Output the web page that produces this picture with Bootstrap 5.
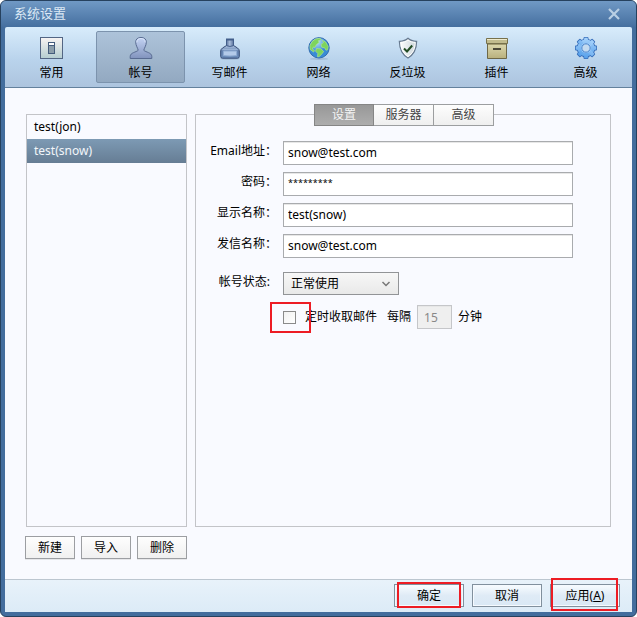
<!DOCTYPE html>
<html lang="zh-CN">
<head>
<meta charset="utf-8">
<meta name="viewport" content="width=device-width, initial-scale=1">
<title>系统设置</title>
<link href="https://cdn.jsdelivr.net/npm/bootstrap@5.3.0/dist/css/bootstrap.min.css" rel="stylesheet">
<style>
body{font:12px/16px "Noto Sans","Noto Sans CJK SC",sans-serif;color:#000;background:#fff}
button,input,select{font-size:12px;line-height:16px;font-family:inherit}
.win{min-height:100vh;padding:0 4px 4px;border:1px solid #26415e;border-radius:6px;background:#436d9d}
.titlebar{height:26px;margin:0 -4px;padding:0 12px 2px 13px;border-radius:5px 5px 0 0;background:linear-gradient(#7099c5,#456f9f);color:#dce9f5}
.titlebar h1{font-size:13px;line-height:20px;font-weight:400}
.closer{width:20px;height:20px;border:0;padding:0;background:none;line-height:0}
.tools{height:61px;padding:4px 2px;border-bottom:1px solid #64819d;border-radius:2px 2px 0 0;background:linear-gradient(#d8ecfb,#b9d3ec 55%,#adc4de)}
.tool{flex:1 1 0;min-width:0;height:52px;padding:3px 0 0;border:1px solid transparent;border-radius:2px;background:none;color:#000}
.tool.active{border-color:#7c93ad;background:linear-gradient(#adc3da,#93a9c1)}
.tool svg{display:block;margin:0 auto 5px}
.main{background:#f9faff;padding:26px 21px 20px}
.side{width:161px;flex:none}
.frame{border:1px solid #c3c4c8}
.acct{height:24px;padding:4px 7px;border:0;background:none;text-align:left;color:#000}
.acct.active{background:linear-gradient(#7d9ab4,#667d94);color:#f2f6fa}
.gbtn{height:23px;padding:2px 0;border:1px solid #9c9ea2;background:linear-gradient(#fefefe,#f0f0f0);box-shadow:0 1px 0 #e6e7ea;color:#000}
.side-actions{width:162px;gap:6px;margin:9px 0 0 -1px}
.tabs{margin-top:-11px;padding-left:2px}
.tab{width:60px;height:22px;padding:2px 0;border:1px solid #9c9ea0;background:linear-gradient(#fdfdfd,#efefef);color:#444}
.tab+.tab{border-left:0}
.tab.active{border-color:#858585;background:linear-gradient(#989898,#adadad);color:#f4f4f4}
.fields{display:grid;grid-template-columns:81px 1fr;column-gap:6px;row-gap:7px;padding:15px 37px 0 0}
.fields label.cap{text-align:right;line-height:20px}
.fields label.half{padding-right:7px}
.box{height:24px;width:100%;padding:0 4px 2px;border:1px solid #a9abae;border-radius:0;background:#fff;box-shadow:inset 0 1px 0 #e7e7e7;color:#000}
.secret{font-size:9px;padding-bottom:4px}
.row-state{margin-top:7px}
.state{width:116px;height:23px;padding:0 7px;border:1px solid #929497;border-radius:0;appearance:none;color:#000;
background:url("data:image/svg+xml,%3Csvg xmlns='http://www.w3.org/2000/svg' width='10' height='8'%3E%3Cpath d='M1.5 2 5 5.5 8.5 2' fill='none' stroke='%23777' stroke-width='1.5'/%3E%3C/svg%3E") right 7px center no-repeat,linear-gradient(#f7f7f7,#e9e9e9)}
.poll{grid-column:2;margin-top:3px}
.tick{display:block;appearance:none;width:13px;height:13px;border:1px solid #8a8a8a;background:linear-gradient(135deg,#f1f1f1,#fff);margin:0 9px 0 0}
.tick:checked{background:#436d9d}
.every{padding-left:10px}
.mins{width:35px;margin:0 6px;padding:0 6px;background:#efefef;border-color:#c5c6c9;color:#888}
.foot{height:33px;padding:4px 12px 0;gap:8px;border-top:1px solid #bcc6d0;background:linear-gradient(#e8f2fa,#dcebf7)}
.fbtn{width:70px;height:23px;padding:2px 0;border:1px solid #81909d;background:linear-gradient(#f8fcff,#dfebf6 50%,#d9e8f5);box-shadow:inset 0 0 0 1px #f5faff;color:#000}
.ring{position:absolute;border:2px solid #ed1c24;pointer-events:none}
.ring-tick{left:-13px;top:-9px;width:41px;height:31px}
.ring-ok{left:3px;right:3px;top:-2px;bottom:-1px}
.ring-apply{left:1px;right:2px;top:-6px;bottom:-4px}
</style>
<script src="https://cdn.jsdelivr.net/npm/bootstrap@5.3.0/dist/js/bootstrap.bundle.min.js"></script>
</head>
<body>
<div class="win d-flex flex-column">
  <header class="titlebar d-flex align-items-center justify-content-between">
    <h1 class="m-0">系统设置</h1>
    <button class="closer" type="button" aria-label="关闭"><svg width="20" height="20" viewBox="0 0 20 20"><path d="m5 6 10 10M15 6 5 16" stroke="#b9cfe4" stroke-width="2.2"/></svg></button>
  </header>
  <nav class="tools d-flex">
    <button class="tool" type="button"><svg width="24" height="24" viewBox="0 0 24 24"><defs><linearGradient id="ga" x2="0" y2="1"><stop stop-color="#f8f4f3"/><stop offset="1" stop-color="#b4cdd0"/></linearGradient><linearGradient id="gb" x2="0" y2="1"><stop stop-color="#c4d4f4"/><stop offset="1" stop-color="#8193bd"/></linearGradient></defs><rect x=".5" y="1.500" width="22" height="21" fill="url(#ga)" stroke="#536684"/><rect x="8.500" y="6.500" width="6" height="11" fill="#8c9eaa" stroke="#445c7c"/><path d="M9 7h5v2H9z" fill="#fff"/><path d="M9 9.500h5" stroke="#445c7c"/></svg>常用</button>
    <button class="tool active" type="button"><svg width="24" height="24" viewBox="0 0 24 24"><path d="M9.200 14.300C9 12.500 6.700 9.500 6.700 6.200c0-3.200 2.100-4.700 5.300-4.700s5.300 1.500 5.300 4.700c0 3.300-2.300 6.300-2.500 8.100 2 2 8 2.200 8 6.200v2H1.200v-2c0-4 6-4.200 8-6.200Z" fill="url(#gb)" stroke="#586b91"/><path d="M7.800 6.300c0-2.600 1.700-3.800 4.200-3.800s4.200 1.200 4.200 3.800" fill="none" stroke="#dbe6fa"/></svg>帐号</button>
    <button class="tool" type="button"><svg width="24" height="24" viewBox="0 0 24 24"><defs><linearGradient id="gc" x2="0" y2="1"><stop stop-color="#b0c5e2"/><stop offset=".45" stop-color="#6583b0"/><stop offset="1" stop-color="#6b8dba"/></linearGradient><linearGradient id="gh"><stop stop-color="#5b749e"/><stop offset=".45" stop-color="#a9bddb"/><stop offset="1" stop-color="#5a729c"/></linearGradient></defs><ellipse cx="12" cy="22.600" rx="10" ry="1.200" fill="#8fa9c5" opacity=".6"/><path d="M8.500 9.500 4.500 12Q2.700 13.300 2.700 15v5.500q0 1.700 1.800 1.700h15q1.800 0 1.800-1.700V15q0-1.700-1.800-3l-4-2.500Z" fill="url(#gc)" stroke="#374e77"/><path d="M8.500 3.500h7v6.200q-3.500 1.500-7 0Z" fill="url(#gh)" stroke="#435e8b"/><path d="M8 3.500h8" stroke="#435e8b" stroke-width="2"/><path d="M5.500 15h13v4.500q-6.500 1-13 0Z" fill="#b3cae9" stroke="#8eabd2"/><path d="M4.500 13.500h15" stroke="#a8c0df" opacity=".7"/></svg>写邮件</button>
    <button class="tool" type="button"><svg width="24" height="24" viewBox="0 0 24 24"><defs><radialGradient id="gd" cx=".4" cy=".2"><stop stop-color="#bce1f6"/><stop offset="1" stop-color="#398bd5"/></radialGradient></defs><ellipse cx="12" cy="22.900" rx="9" ry="1" fill="#8fa9c5" opacity=".6"/><circle cx="12" cy="11.800" r="10.200" fill="url(#gd)" stroke="#326db0"/><path d="M8.500 3 13 2.200l1.200 1.500-3 1.100 1 1.400-3 2.600-1.300 2.600-1.500-.5-1.100 2 2.100 1.600-.8 1.600-3.500-2.700L3 9.500 5.200 5.500ZM15.300 4.300l3.400 1.800 2.500 4.300-.5 3.300-1.700.6-1.300-2.400-3-.7-.5-3 2.300-1.500ZM9.500 12.500l4.200.3 3 2.600-1.700 2.400-2.700 2.800-1.800.2.300-3.300-2.200-2.300Z" fill="#7ed45c" stroke="#b4ea90" stroke-width=".6"/></svg>网络</button>
    <button class="tool" type="button"><svg width="24" height="24" viewBox="0 0 24 24"><defs><linearGradient id="ge"><stop stop-color="#fff"/><stop offset="1" stop-color="#c9d3d8"/></linearGradient></defs><path d="M12 2.300c2.400 2.400 5.200 3 8.600 3-.1 7.500-2 13-8.600 16.700C5.400 18.300 3.500 12.800 3.400 5.300c3.400 0 6.200-.6 8.600-3Z" fill="url(#ge)" stroke="#687b91" stroke-width="1.300"/><path d="M12 3.900c2.200 1.800 4.600 2.400 7.200 2.500-.3 6.300-2.200 11-7.200 14.100C7 17.400 5.100 12.700 4.800 6.400 7.400 6.300 9.800 5.700 12 3.900Z" fill="none" stroke="#fff"/><path d="m8 12.500 3 3L16.200 9.500" fill="none" stroke="#234c25" stroke-width="2"/></svg>反垃圾</button>
    <button class="tool" type="button"><svg width="24" height="24" viewBox="0 0 24 24"><defs><linearGradient id="gf" x2="0" y2="1"><stop stop-color="#dedab0"/><stop offset="1" stop-color="#b8b07d"/></linearGradient></defs><path d="M2.500 7.500h19v15h-19z" fill="url(#gf)" stroke="#6e6847"/><path d="M1.500 2.500h21v5h-21z" fill="#c2bc8e" stroke="#77714c"/><path d="M2 3.500h20" stroke="#eeebcf"/><path d="M3 8.500h18" stroke="#a39c70"/><path d="M8 12h8v2H8z" fill="#4b4838"/></svg>插件</button>
    <button class="tool" type="button"><svg width="24" height="24" viewBox="0 0 24 24"><defs><linearGradient id="gg" gradientUnits="userSpaceOnUse" x1="12" y1="1" x2="12" y2="23"><stop stop-color="#a9d4fc"/><stop offset="1" stop-color="#539eea"/></linearGradient></defs><g fill="#386fba" stroke="#386fba" stroke-width="1.600" stroke-linejoin="round"><circle cx="12" cy="12" r="8.500"/><path id="gt" d="M10 4l.4-2.200h3.200L14 4v16l-.4 2.200h-3.200L10 20ZM4 10h16l2.200.4v3.200L20 14H4l-2.200-.4v-3.200Z"/><path transform="rotate(45 12 12)" d="M10 4l.4-2.200h3.200L14 4v16l-.4 2.200h-3.200L10 20ZM4 10h16l2.200.4v3.200L20 14H4l-2.200-.4v-3.200Z"/></g><g fill="url(#gg)"><circle cx="12" cy="12" r="8.500"/><path d="M10 4l.4-2.200h3.200L14 4v16l-.4 2.200h-3.200L10 20ZM4 10h16l2.200.4v3.200L20 14H4l-2.200-.4v-3.200Z"/><path transform="rotate(45 12 12)" d="M10 4l.4-2.200h3.200L14 4v16l-.4 2.200h-3.200L10 20ZM4 10h16l2.200.4v3.200L20 14H4l-2.200-.4v-3.200Z"/></g><circle cx="12" cy="12" r="5" fill="#b5d8fa"/><circle cx="12" cy="12" r="4.200" fill="#c3daf0" stroke="#4280cb"/></svg>高级</button>
  </nav>
  <main class="main flex-grow-1 d-flex flex-column">
    <div class="flex-grow-1 d-flex gap-2">
      <div class="frame side d-flex flex-column">
        <button class="acct" type="button">test(jon)</button>
        <button class="acct active" type="button">test(snow)</button>
      </div>
      <section class="frame flex-grow-1">
        <div class="tabs d-flex justify-content-center">
          <button class="tab active" type="button">设置</button>
          <button class="tab" type="button">服务器</button>
          <button class="tab" type="button">高级</button>
        </div>
        <form class="fields">
          <label class="cap" for="mail">Email地址：</label><input class="box" id="mail" type="text" value="snow@test.com">
          <label class="cap" for="pass">密码：</label><input class="box secret" id="pass" type="text" value="*********">
          <label class="cap" for="shown">显示名称：</label><input class="box" id="shown" type="text" value="test(snow)">
          <label class="cap" for="sender">发信名称：</label><input class="box" id="sender" type="text" value="snow@test.com">
          <label class="cap half row-state" for="state">帐号状态:</label>
          <div class="row-state"><select class="state" id="state"><option>正常使用</option></select></div>
          <div class="poll d-flex align-items-center">
            <div class="position-relative"><input class="tick" id="poll" type="checkbox"><span class="ring ring-tick"></span></div>
            <label for="poll">定时收取邮件</label>
            <label for="mins" class="every">每隔</label>
            <input class="box mins" id="mins" type="text" value="15" disabled>
            <span>分钟</span>
          </div>
        </form>
      </section>
    </div>
    <div class="side side-actions d-flex">
      <button class="gbtn flex-fill" type="button">新建</button>
      <button class="gbtn flex-fill" type="button">导入</button>
      <button class="gbtn flex-fill" type="button">删除</button>
    </div>
  </main>
  <footer class="foot d-flex justify-content-end">
    <div class="position-relative align-self-start"><button class="fbtn d-block" type="button">确定</button><span class="ring ring-ok"></span></div>
    <button class="fbtn" type="button">取消</button>
    <div class="position-relative align-self-start"><button class="fbtn d-block" type="button">应用(<u>A</u>)</button><span class="ring ring-apply"></span></div>
  </footer>
</div>
</body>
</html>
